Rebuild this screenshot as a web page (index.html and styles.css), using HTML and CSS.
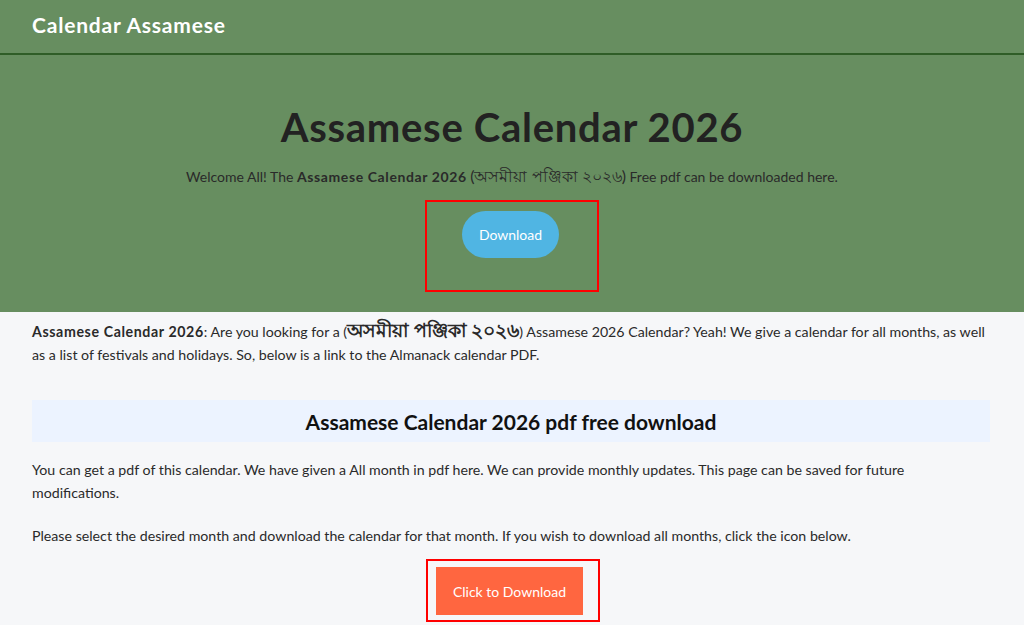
FILE: index.html
```html
<!DOCTYPE html>
<html lang="en">
<head>
<meta charset="utf-8">
<title>Calendar Assamese</title>
<link rel="stylesheet" href="styles.css">
</head>
<body>
<header class="topbar">
  <div class="brand">Calendar Assamese</div>
</header>
<section class="hero">
  <h1 class="hero-title">Assamese Calendar 2026</h1>
  <p class="hero-sub">Welcome All! The <strong>Assamese Calendar 2026</strong> <span class="bn">(অসমীয়া পঞ্জিকা ২০২৬)</span> Free pdf can be downloaded here.</p>
  <div class="mark mark-hero">
    <a class="btn-pill" href="#">Download</a>
  </div>
</section>
<main class="content">
  <p class="lead"><strong>Assamese Calendar 2026</strong>: Are you looking for a (<strong class="bn-bold">অসমীয়া পঞ্জিকা ২০২৬</strong>) Assamese 2026 Calendar? Yeah! We give a calendar for all months, as well as a list of festivals and holidays. So, below is a link to the Almanack calendar PDF.</p>
  <div class="section-head">
    <h2>Assamese Calendar 2026 pdf free download</h2>
  </div>
  <p>You can get a pdf of this calendar. We have given a All month in pdf here. We can provide monthly updates. This page can be saved for future modifications.</p>
  <p class="note">Please select the desired month and download the calendar for that month. If you wish to download all months, click the icon below.</p>
  <div class="center">
    <div class="mark mark-body">
      <a class="btn-orange" href="#">Click to Download</a>
    </div>
  </div>
</main>
</body>
</html>
```
FILE: styles.css
```css
* { box-sizing: border-box; }
html, body { margin: 0; padding: 0; }
body {
  font-family: "Lato", "Noto Sans", sans-serif;
  background: #f6f7f9;
  color: #222;
  overflow: hidden;
}
strong {
  letter-spacing: 0.6px;
}
.topbar {
  background: #678e60;
  height: 55px;
  border-bottom: 2px solid #2f5d27;
  display: flex;
  align-items: center;
  padding: 0 32px 4px;
}
.brand {
  color: #fff;
  font-weight: 700;
  font-size: 21px;
  letter-spacing: 0.8px;
}
.hero {
  background: #678e60;
  text-align: center;
  padding: 47px 0 20px;
}
.hero-title {
  margin: 0;
  font-size: 40px;
  line-height: 50px;
  font-weight: 700;
  color: #222;
  letter-spacing: 0.7px;
}
.hero-sub {
  margin: 14px 0 12px;
  font-size: 14px;
  line-height: 22px;
  color: #2a2a2a;
}
.bn {
  font-size: 16px;
  line-height: 14px;
}
.bn-bold {
  font-size: 19px;
  line-height: 14px;
  letter-spacing: 0;
}
.mark {
  display: inline-flex;
  border: 2px solid #f00;
}
.mark-hero {
  width: 174px;
  height: 92px;
  padding: 9px 38px 0 35px;
  align-items: flex-start;
}
.btn-pill {
  display: inline-flex;
  align-items: center;
  justify-content: center;
  width: 97px;
  height: 47px;
  border-radius: 24px;
  background: #50b5e3;
  color: #fff;
  font-size: 14px;
  text-decoration: none;
}
.content {
  padding: 8px 34px 0 32px;
}
.content p {
  margin: 0 0 20px;
  font-size: 14.2px;
  line-height: 23px;
  color: #2a2a2a;
}
.content .lead {
  margin-bottom: 34px;
}
.content .note {
  margin-bottom: 12px;
}
.section-head {
  background: #ecf3ff;
  height: 42px;
  margin: 0 0 16px 0;
  display: flex;
  align-items: center;
  justify-content: center;
}
.section-head h2 {
  margin: 0;
  font-size: 21px;
  font-weight: 700;
  color: #111;
}
.center {
  display: flex;
  justify-content: center;
}
.mark-body {
  width: 174px;
  height: 63px;
  padding: 6px 15px 0 8px;
  margin-left: 4px;
}
.btn-orange {
  display: flex;
  align-items: center;
  justify-content: center;
  width: 147px;
  height: 48px;
  background: #ff6640;
  color: #fff;
  font-size: 14px;
  text-decoration: none;
}
```
